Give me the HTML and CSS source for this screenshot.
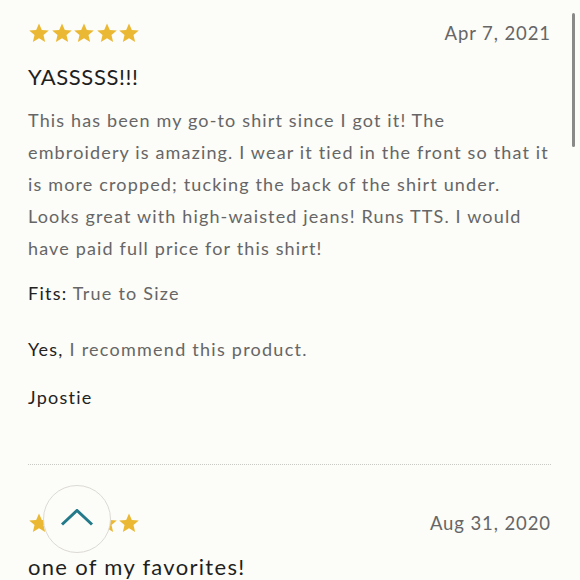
FILE: index.html
```html
<!DOCTYPE html>
<html>
<head>
<meta charset="utf-8">
<link rel="stylesheet" href="styles.css">
</head>
<body>
<div class="page">
  <article class="review">
    <div class="head">
      <div class="stars">
        <svg viewBox="0 0 24 24"><path d="M12 1.5l3.1 7.1 7.6.6-5.8 5 1.8 7.5L12 17.7l-6.7 4 1.8-7.5-5.8-5 7.6-.6z"/></svg>
        <svg viewBox="0 0 24 24"><path d="M12 1.5l3.1 7.1 7.6.6-5.8 5 1.8 7.5L12 17.7l-6.7 4 1.8-7.5-5.8-5 7.6-.6z"/></svg>
        <svg viewBox="0 0 24 24"><path d="M12 1.5l3.1 7.1 7.6.6-5.8 5 1.8 7.5L12 17.7l-6.7 4 1.8-7.5-5.8-5 7.6-.6z"/></svg>
        <svg viewBox="0 0 24 24"><path d="M12 1.5l3.1 7.1 7.6.6-5.8 5 1.8 7.5L12 17.7l-6.7 4 1.8-7.5-5.8-5 7.6-.6z"/></svg>
        <svg viewBox="0 0 24 24"><path d="M12 1.5l3.1 7.1 7.6.6-5.8 5 1.8 7.5L12 17.7l-6.7 4 1.8-7.5-5.8-5 7.6-.6z"/></svg>
      </div>
      <div class="date">Apr 7, 2021</div>
    </div>
    <h2 class="title">YASSSSS!!!</h2>
    <p class="body">This has been my go-to shirt since I got it! The<br>embroidery is amazing. I wear it tied in the front so that it<br>is more cropped; tucking the back of the shirt under.<br>Looks great with high-waisted jeans! Runs TTS. I would<br>have paid full price for this shirt!</p>
    <p class="meta"><span class="label">Fits:</span> True to Size</p>
    <p class="meta rec"><span class="label">Yes,</span> I recommend this product.</p>
    <p class="author">Jpostie</p>
  </article>
  <article class="review second">
    <div class="head">
      <div class="stars">
        <svg viewBox="0 0 24 24"><path d="M12 1.5l3.1 7.1 7.6.6-5.8 5 1.8 7.5L12 17.7l-6.7 4 1.8-7.5-5.8-5 7.6-.6z"/></svg>
        <svg viewBox="0 0 24 24"><path d="M12 1.5l3.1 7.1 7.6.6-5.8 5 1.8 7.5L12 17.7l-6.7 4 1.8-7.5-5.8-5 7.6-.6z"/></svg>
        <svg viewBox="0 0 24 24"><path d="M12 1.5l3.1 7.1 7.6.6-5.8 5 1.8 7.5L12 17.7l-6.7 4 1.8-7.5-5.8-5 7.6-.6z"/></svg>
        <svg viewBox="0 0 24 24"><path d="M12 1.5l3.1 7.1 7.6.6-5.8 5 1.8 7.5L12 17.7l-6.7 4 1.8-7.5-5.8-5 7.6-.6z"/></svg>
        <svg viewBox="0 0 24 24"><path d="M12 1.5l3.1 7.1 7.6.6-5.8 5 1.8 7.5L12 17.7l-6.7 4 1.8-7.5-5.8-5 7.6-.6z"/></svg>
      </div>
      <div class="date">Aug 31, 2020</div>
    </div>
    <h2 class="title">one of my favorites!</h2>
  </article>
</div>
<button class="to-top" aria-label="Back to top">
  <svg viewBox="0 0 34 17"><path d="M2 15.5L17 1.5L32 15.5" fill="none" stroke="#237a8a" stroke-width="3"/></svg>
</button>
<div class="scrollbar"></div>
</body>
</html>
```
FILE: styles.css
```css
html, body {
  margin: 0;
  padding: 0;
  background: #fcfcf8;
  overflow: hidden;
  height: 580px;
}
body {
  font-family: Lato, "Noto Sans", sans-serif;
  color: #222;
}
.page {
  padding: 0 29px 0 28px;
}
.review {
  padding-top: 21px;
  padding-bottom: 54px;
  border-bottom: 1px dotted #c8c8c4;
}
.review.second {
  border-bottom: none;
  padding-top: 46px;
}
.head {
  display: flex;
  justify-content: space-between;
  align-items: center;
  height: 24px;
}
.stars {
  display: flex;
  gap: 0.5px;
}
.stars svg {
  width: 22px;
  height: 22px;
  fill: #ebb833;
}
.date {
  font-size: 18.5px;
  letter-spacing: 0.9px;
  color: #666;
}
.title {
  margin: 18px 0 0;
  font-size: 22px;
  font-weight: 400;
  letter-spacing: 0.6px;
  line-height: 28px;
  color: #1f1f1f;
}
.second .title {
  letter-spacing: 1.3px;
}
.body {
  margin: 13px 0 0;
  font-size: 18px;
  line-height: 32px;
  letter-spacing: 1.15px;
  color: #666;
}
.meta {
  margin: 16px 0 0;
  font-size: 18px;
  line-height: 26px;
  letter-spacing: 1.25px;
  color: #666;
}
.meta.rec {
  margin-top: 30px;
}
.label {
  color: #222;
}
.author {
  margin: 22px 0 0;
  font-size: 18px;
  line-height: 26px;
  letter-spacing: 1.25px;
  color: #222;
}
.to-top {
  position: absolute;
  left: 43px;
  top: 485px;
  width: 68px;
  height: 68px;
  border-radius: 50%;
  border: 1px solid #dcdad4;
  background: #fcfcf8;
  padding: 0;
  display: flex;
  align-items: center;
  justify-content: center;
}
.to-top svg {
  width: 34px;
  height: 17px;
  margin-top: -4px;
}
.scrollbar {
  position: absolute;
  right: 5px;
  top: 13px;
  width: 3px;
  height: 134px;
  border-radius: 2px;
  background: #8a8a88;
}
```
